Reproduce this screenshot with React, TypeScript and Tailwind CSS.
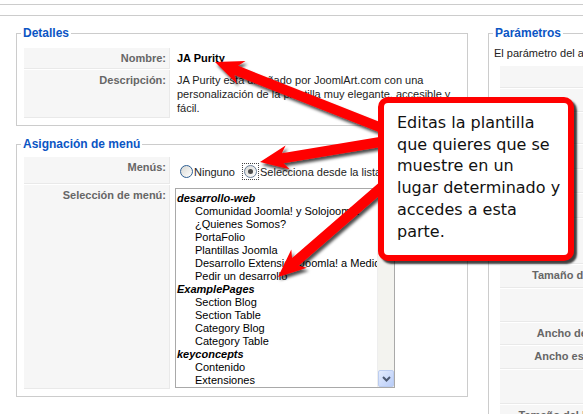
import React from 'react';

const menuItems: { t: string; g?: boolean }[] = [
  { t: 'desarrollo-web', g: true },
  { t: 'Comunidad Joomla! y Solojoomla' },
  { t: '¿Quienes Somos?' },
  { t: 'PortaFolio' },
  { t: 'Plantillas Joomla' },
  { t: 'Desarrollo Extension Joomla! a Medida' },
  { t: 'Pedir un desarrollo' },
  { t: 'ExamplePages', g: true },
  { t: 'Section Blog' },
  { t: 'Section Table' },
  { t: 'Category Blog' },
  { t: 'Category Table' },
  { t: 'keyconcepts', g: true },
  { t: 'Contenido' },
  { t: 'Extensiones' },
  { t: 'Enlaces web' },
];

// filas de la tabla de parámetros (la mayoría queda tapada por el globo)
const paramRows = [
  { h: 'h-[22px]', label: 'Color:' },
  { h: 'h-[23px]', label: 'Menú:' },
  { h: 'h-[31px]', label: 'Tipo:' },
  { h: 'h-[24px]', label: 'Logo:' },
  { h: 'h-[23px]', label: 'Texto:' },
  { h: 'h-[24px]', label: 'Lema:' },
  { h: 'h-[45px]', label: 'Pie:' },
  { h: 'h-[23px]', label: 'Tamaño de fuente:' },
  { h: 'h-[33px]', label: '' },
  { h: 'h-[22px]', label: 'Ancho de página:' },
  { h: 'h-[23px]', label: 'Ancho específico:' },
  { h: 'h-[34px]', label: '' },
  { h: 'h-[30px]', label: 'Tamaño del logotipo:' },
];

function arrowPoints(x1: number, y1: number, x2: number, y2: number) {
  const dx = x2 - x1;
  const dy = y2 - y1;
  const len = Math.hypot(dx, dy);
  const ux = dx / len;
  const uy = dy / len;
  const nx = -uy;
  const ny = ux;
  const w = 5;
  const hw = 12;
  const hl = 28;
  const notch = 5;
  const bx = x2 - ux * hl;
  const by = y2 - uy * hl;
  const jx = x2 - ux * (hl - notch);
  const jy = y2 - uy * (hl - notch);
  const pts = [
    [x1 + nx * w, y1 + ny * w],
    [jx + nx * w, jy + ny * w],
    [bx + nx * hw, by + ny * hw],
    [x2, y2],
    [bx - nx * hw, by - ny * hw],
    [jx - nx * w, jy - ny * w],
    [x1 - nx * w, y1 - ny * w],
  ];
  return pts.map(p => `${p[0].toFixed(1)},${p[1].toFixed(1)}`).join(' ');
}

function Chevron({ up }: { up?: boolean }) {
  return (
    <svg width="9" height="6" viewBox="0 0 9 6">
      <path d={up ? 'M1 5 L4.5 1.5 L8 5' : 'M1 1 L4.5 4.5 L8 1'} fill="none" stroke="#4d5a72" strokeWidth="2" />
    </svg>
  );
}

export default function App() {
  return (
    <div className="relative w-[583px] h-[414px] overflow-hidden bg-white font-['Liberation_Sans',Arial,Helvetica,sans-serif] text-[11px] text-[#333]">
      <div className="h-[5px] border-b border-[#cccccc]" />
      <div className="h-[11px] border-b border-[#cccccc]" />

      <div className="flex items-start pl-[16px] pt-[10px]">
        {/* columna izquierda */}
        <div className="w-[452px] shrink-0">
          <fieldset className="min-w-0 border border-[#cccccc] px-[6px] pt-[7px] pb-[6px] mb-[11px]">
            <legend className="-ml-[2px] px-[2px] text-[12px] leading-[14px] font-bold text-[#0b55c4]">Detalles</legend>
            <div className="grid grid-cols-[146px_1fr] gap-[1px] p-[1px]">
              <div className="bg-[#f6f6f6] border-b border-r border-[#e9e9e9] text-right pr-[3px] py-[3px] leading-[14px] font-bold text-[#666]">Nombre:</div>
              <div className="px-[6px] py-[3px] leading-[14px] font-bold text-black">JA Purity</div>
              <div className="bg-[#f6f6f6] border-b border-r border-[#e9e9e9] text-right pr-[3px] py-[3px] leading-[14px] font-bold text-[#666]">Descripción:</div>
              <div className="px-[6px] py-[3px] leading-[14px] text-[#222]">
                JA Purity está diseñado por JoomlArt.com con una personalización de la plantilla muy elegante, accesible y fácil.
              </div>
            </div>
          </fieldset>

          <fieldset className="min-w-0 border border-[#cccccc] px-[6px] pt-[5px] pb-[6px]">
            <legend className="-ml-[2px] px-[2px] text-[12px] leading-[14px] font-bold text-[#0b55c4]">Asignación de menú</legend>
            <div className="grid grid-cols-[146px_1fr] gap-[1px] p-[1px]">
              <div className="bg-[#f6f6f6] border-b border-r border-[#e9e9e9] text-right pr-[3px] py-[3px] leading-[14px] font-bold text-[#666]">Menús:</div>
              <div className="flex items-center px-[4px] pt-[6px] pb-[4px] leading-[14px] text-[#222]">
                <span className="ml-[5px] w-[13px] h-[13px] rounded-full border border-[#2f5f93] bg-gradient-to-br from-[#d8d8d3] to-white" />
                <span className="ml-[1px]">Ninguno</span>
                <span className="ml-[7px] w-[17px] h-[17px] border border-dotted border-[#444] flex items-center justify-center">
                  <span className="w-[13px] h-[13px] rounded-full border border-[#6b7f99] bg-gradient-to-br from-[#d8d8d3] to-white flex items-center justify-center">
                    <span className="w-[5px] h-[5px] rounded-full bg-[#4a4a4a]" />
                  </span>
                </span>
                <span className="ml-[1px] whitespace-nowrap">Selecciona desde la lista</span>
              </div>

              <div className="bg-[#f6f6f6] border-b border-r border-[#e9e9e9] text-right pr-[3px] py-[3px] leading-[14px] font-bold text-[#666]">Selección de menú:</div>
              <div className="px-[4px] pt-[3px] pb-[1px]">
                <div className="w-[220px] h-[200px] border border-[#a9a9a9] flex bg-white">
                  <div className="flex-1 overflow-hidden pt-[3px] text-black">
                    {menuItems.map(item => (
                      <div
                        key={item.t}
                        className={item.g
                          ? 'pl-[1px] leading-[13px] whitespace-nowrap font-bold italic'
                          : 'pl-[19px] leading-[13px] whitespace-nowrap'}
                      >
                        {item.t}
                      </div>
                    ))}
                  </div>
                  <div className="w-[17px] flex flex-col bg-[#f3f3ef] border-l border-[#eeeeee]">
                    <div className="h-[17px] rounded-[2px] border border-[#bccdf0] bg-gradient-to-br from-[#e4ecfd] to-[#b9cdf8] flex items-center justify-center">
                      <Chevron up />
                    </div>
                    <div className="h-[30px] rounded-[2px] border border-[#bccdf0] bg-gradient-to-r from-[#d3e0fd] to-[#c2d4fb]" />
                    <div className="flex-1" />
                    <div className="h-[17px] rounded-[2px] border border-[#bccdf0] bg-gradient-to-br from-[#e4ecfd] to-[#b9cdf8] flex items-center justify-center">
                      <Chevron />
                    </div>
                  </div>
                </div>
              </div>
            </div>
          </fieldset>
        </div>

        {/* columna derecha */}
        <div className="ml-[20px] w-[400px] shrink-0">
          <fieldset className="min-w-0 border border-[#cccccc] px-[5px] pt-[6px] pb-[6px]">
            <legend className="-ml-[1px] px-[2px] text-[12px] leading-[14px] font-bold text-[#0b55c4]">Parámetros</legend>
            <p className="leading-[14px] whitespace-nowrap text-[#222]">El parámetro del archivo templates/ja_purity/params.ini es editable.</p>
            <div className="mt-[6px] pl-[6px] flex flex-col gap-[1px]">
              {paramRows.map((r, i) => (
                <div key={i} className={`flex ${r.h}`}>
                  <div className="w-[135px] shrink-0 bg-[#f6f6f6] border-b border-r border-[#e9e9e9] text-right pr-[5px] py-[3px] leading-[14px] font-bold text-[#666] whitespace-nowrap">
                    {r.label}
                  </div>
                  <div className="flex-1" />
                </div>
              ))}
            </div>
          </fieldset>
        </div>
      </div>

      {/* flechas */}
      <svg className="absolute left-0 top-0 pointer-events-none" width="583" height="414" viewBox="0 0 583 414">
        <defs>
          <filter id="sombra" x="-20%" y="-20%" width="140%" height="140%">
            <feDropShadow dx="2" dy="3" stdDeviation="1.5" floodColor="#000" floodOpacity="0.7" />
          </filter>
        </defs>
        <g filter="url(#sombra)" fill="#ff0000">
          <polygon points={arrowPoints(392, 132, 215, 62)} />
          <polygon points={arrowPoints(392, 140, 260, 162)} />
          <polygon points={arrowPoints(392, 178, 278, 277)} />
        </g>
      </svg>

      {/* globo */}
      <div className="absolute left-[378px] top-[97px] w-[196px] h-[164px] rounded-[10px] border-[6px] border-[#ff0000] bg-white shadow-[3px_3px_2px_rgba(0,0,0,0.75)] pl-[13px] pt-[9px] font-['DejaVu_Sans',Verdana,sans-serif] text-[16px] leading-[21.7px] text-[#111] whitespace-nowrap">
        Editas la plantilla<br />
        que quieres que se<br />
        muestre en un<br />
        lugar determinado y<br />
        accedes a esta<br />
        parte.
      </div>
    </div>
  );
}
